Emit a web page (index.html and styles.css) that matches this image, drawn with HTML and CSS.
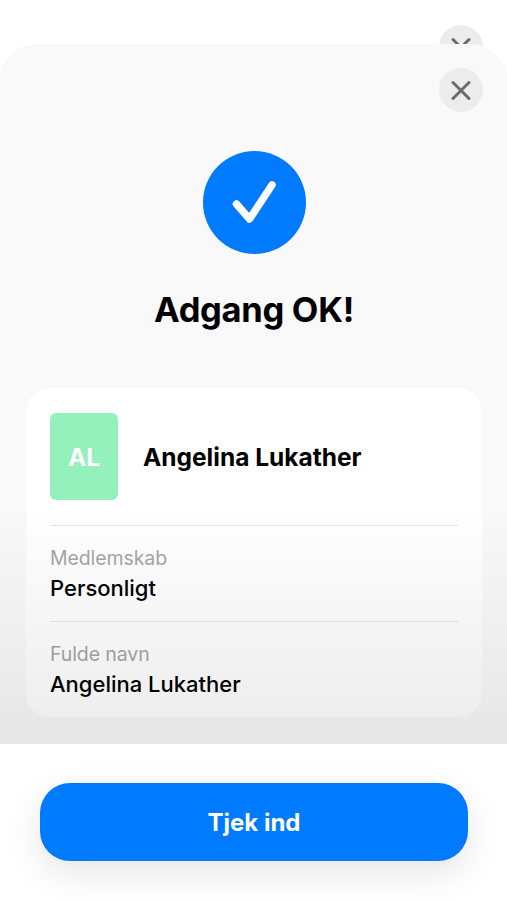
FILE: index.html
```html
<!DOCTYPE html>
<html lang="da">
<head>
    <meta charset="UTF-8">
    <meta name="viewport" content="width=device-width, initial-scale=1.0">
    <title>Adgang OK!</title>
    <link rel="stylesheet" href="styles.css">
</head>
<body>

<header class="back-page">
    <button class="close" aria-label="Luk">
        <svg width="20" height="20" viewBox="0 0 20 20"><path d="M2 2.5L18 18.5M18 2.5L2 18.5"/></svg>
    </button>
</header>

<main class="sheet">
    <button class="close" aria-label="Luk">
        <svg width="20" height="20" viewBox="0 0 20 20"><path d="M2 2.5L18 18.5M18 2.5L2 18.5"/></svg>
    </button>

    <div class="status">
        <svg width="103" height="103" viewBox="0 0 103 103"><path d="M33.5 53L46.5 68L69 34"/></svg>
    </div>
    <h1>Adgang OK!</h1>

    <section class="card">
        <div class="member">
            <div class="avatar">AL</div>
            <h2>Angelina Lukather</h2>
        </div>
        <div class="field">
            <div class="label">Medlemskab</div>
            <div class="value">Personligt</div>
        </div>
        <div class="field">
            <div class="label">Fulde navn</div>
            <div class="value">Angelina Lukather</div>
        </div>
    </section>
    <div class="fade"></div>
</main>

<footer>
    <button class="checkin">Tjek ind</button>
</footer>

</body>
</html>
```

FILE: styles.css
```css
* {
    box-sizing: border-box;
}
body {
    font-family: Inter, sans-serif;
    background-color: #fff;
    color: #000;
    margin: 0;
    height: 900px;
    display: flex;
    flex-direction: column;
    overflow: hidden;
}
button {
    border: none;
    font-family: inherit;
    cursor: pointer;
}
.back-page {
    height: 44px;
    padding: 25px 24.5px 0;
    display: flex;
    justify-content: flex-end;
}
.close {
    flex: none;
    width: 44px;
    height: 44px;
    padding: 0;
    border-radius: 50%;
    background-color: #ececec;
    display: flex;
    align-items: center;
    justify-content: center;
}
.close svg {
    fill: none;
    stroke: #6b6b6b;
    stroke-width: 3;
    stroke-linecap: round;
}
/* The sheet covers the lower half of the button behind it */
.sheet {
    position: relative;
    height: 700px;
    padding: 24px 25px 0 26px;
    border-radius: 36px 36px 0 0;
    background-color: #f9f9f9;
    display: flex;
    flex-direction: column;
}
.sheet .close {
    align-self: flex-end;
    margin-right: -0.5px;
}
.status {
    width: 103px;
    height: 103px;
    margin: 39px 176.5px 0;
    border-radius: 50%;
    background-color: #007aff;
}
.status svg {
    display: block;
    fill: none;
    stroke: #fff;
    stroke-width: 7.5;
    stroke-linecap: round;
    stroke-linejoin: round;
}
h1 {
    margin: 33px 0 56px;
    font-size: 34.5px;
    line-height: 45px;
    font-weight: 700;
    letter-spacing: -0.3px;
    text-align: center;
}
.card {
    height: 329px;
    padding: 25px 24px 0;
    border-radius: 24px;
    background-color: #fff;
}
.member {
    display: flex;
    align-items: center;
    gap: 25px;
    padding-bottom: 25px;
}
.avatar {
    width: 68px;
    height: 87px;
    border-radius: 6px;
    background-color: #94f1bb;
    color: #fff;
    font-size: 24.5px;
    font-weight: 700;
    display: flex;
    align-items: center;
    justify-content: center;
}
h2 {
    margin: 0;
    font-size: 24.5px;
    font-weight: 700;
}
.field {
    height: 96px;
    padding-top: 18px;
    border-top: 1px solid #e6e6e6;
}
.label {
    color: #a6a6a6;
    font-size: 19.5px;
    line-height: 28px;
    letter-spacing: -0.1px;
}
.value {
    font-size: 22px;
    line-height: 32px;
    font-weight: 500;
}
.fade {
    position: absolute;
    left: 0;
    right: 0;
    bottom: 0;
    height: 240px;
    background: linear-gradient(rgba(0, 0, 0, 0), rgba(0, 0, 0, 0.07) 92%);
    pointer-events: none;
}
footer {
    flex: 1;
    padding: 39px 39px 0 40px;
}
.checkin {
    width: 100%;
    height: 78px;
    border-radius: 30px;
    background-color: #007aff;
    color: #fff;
    font-size: 24px;
    font-weight: 700;
    box-shadow: 0 12px 36px rgba(0, 0, 0, 0.1);
}
```
